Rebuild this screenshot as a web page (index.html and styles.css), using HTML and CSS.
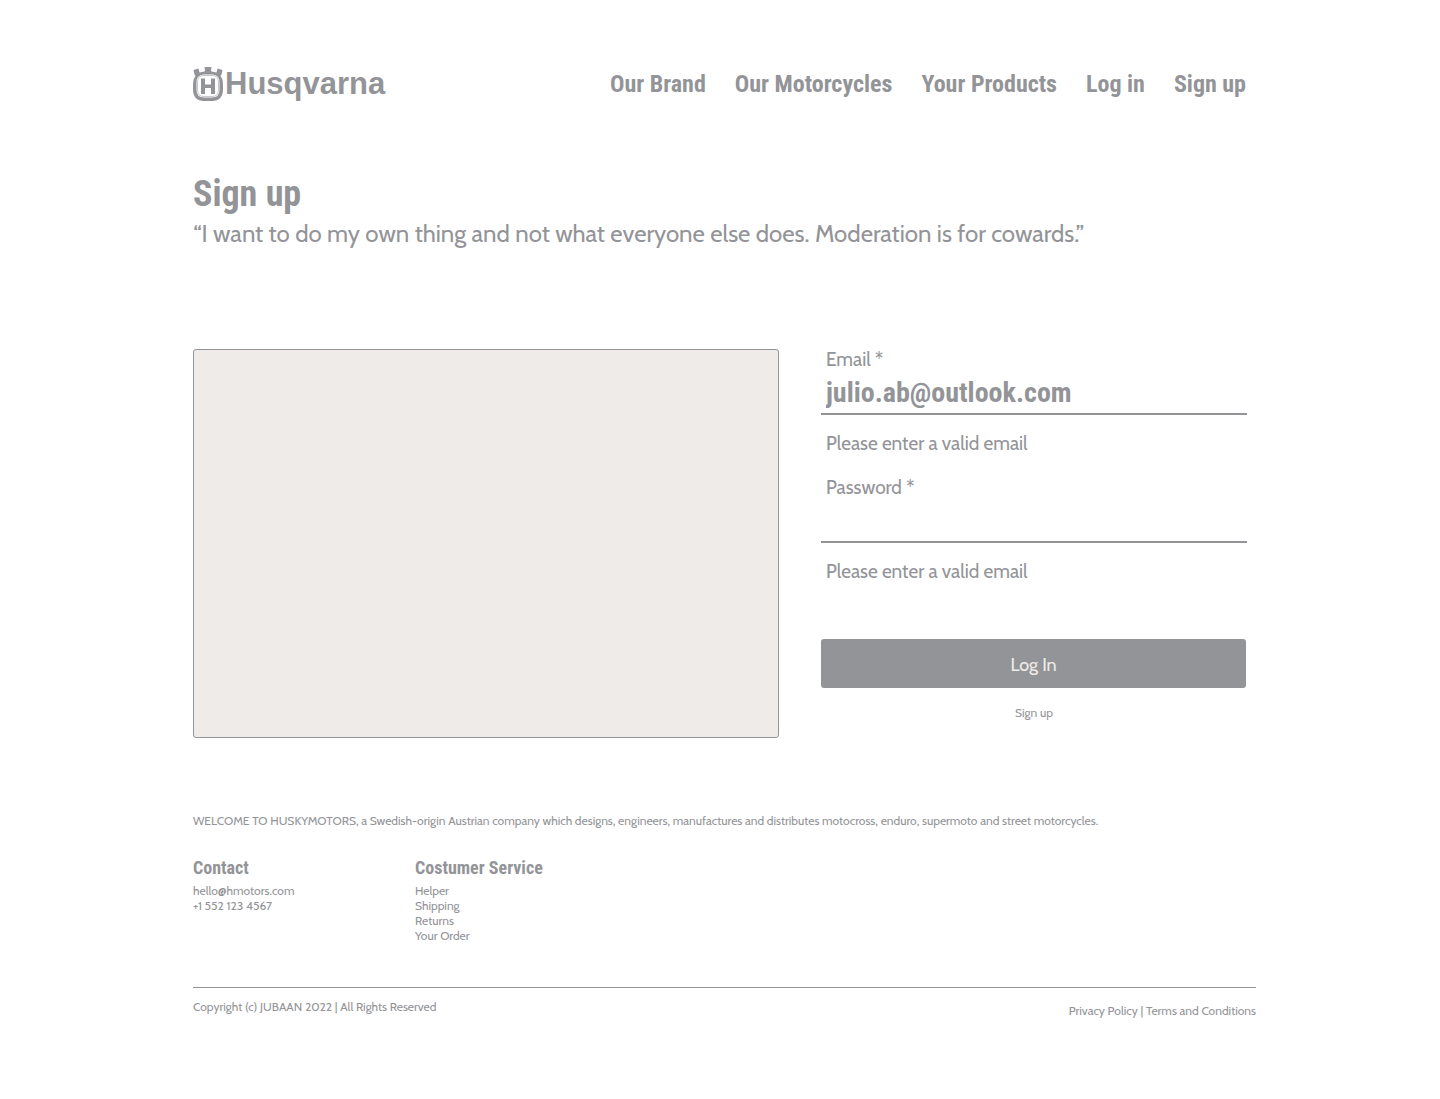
FILE: index.html
```html
<!DOCTYPE html>
<html lang="en">
<head>
<meta charset="utf-8">
<meta name="viewport" content="width=device-width, initial-scale=1">
<title>Sign up | Husqvarna</title>
<link rel="stylesheet" href="styles.css">
</head>
<body>
<div class="page">
  <header class="header">
    <a class="logo" href="#">
      <svg class="logo-mark" viewBox="0 0 30 34" aria-hidden="true">
        <path fill="currentColor" fill-rule="evenodd" d="M0.500 3 L5.500 1.500 L6.500 5.500 L11.500 4.500 L12 3.500 L11.500 0 H18.500 L18 3.500 L18.500 4.500 L23.500 5.500 L24.500 1.500 L29.500 3 L28.500 7.500 L27.500 9 Q30 12 30 18 V22 Q30 34 19 34 H11 Q0 34 0 22 V18 Q0 12 2.500 9 L1.500 7.500 Z M10.500 7.500 Q3.500 8 3.500 15 V23 Q3.500 30.500 11 30.500 H19 Q26.500 30.500 26.500 23 V15 Q26.500 8 19.500 7.500 Z"/>
        <path fill="none" stroke="currentColor" stroke-width="1" opacity="0.500" d="M11 8.500 H19 Q25.500 8.500 25.500 15 V23 Q25.500 29.500 19 29.500 H11 Q4.500 29.500 4.500 23 V15 Q4.500 8.500 11 8.500 Z"/>
        <path fill="currentColor" d="M8 11.500 H12 V17.500 H18 V11.500 H22 V27 H18 V21 H12 V27 H8 Z"/>
      </svg>
      <span class="logo-name">Husqvarna</span>
    </a>
    <nav class="nav" aria-label="Main">
      <a href="#">Our Brand</a>
      <a href="#">Our Motorcycles</a>
      <a href="#">Your Products</a>
      <a href="#">Log in</a>
      <a href="#">Sign up</a>
    </nav>
  </header>

  <main>
    <section class="intro">
      <h1>Sign up</h1>
      <p>“I want to do my own thing and not what everyone else does. Moderation is for cowards.”</p>
    </section>
    <section class="signup">
      <div class="picture"></div>
      <form class="form">
        <div class="field">
          <label for="email">Email *</label>
          <input id="email" type="email" value="julio.ab@outlook.com" aria-describedby="email-hint">
          <p id="email-hint">Please enter a valid email</p>
        </div>
        <div class="field">
          <label for="password">Password *</label>
          <input id="password" type="password" aria-describedby="password-hint">
          <p id="password-hint">Please enter a valid email</p>
        </div>
        <button class="submit" type="button">Log In</button>
        <a class="alternate" href="#">Sign up</a>
      </form>
    </section>
  </main>

  <footer class="footer">
    <p>WELCOME TO HUSKYMOTORS, a Swedish-origin Austrian company which designs, engineers, manufactures and distributes motocross, enduro, supermoto and street motorcycles.</p>
    <div class="columns">
      <section>
        <h2>Contact</h2>
        <ul>
          <li><a href="#">hello@hmotors.com</a></li>
          <li><a href="#">+1 552 123 4567</a></li>
        </ul>
      </section>
      <section>
        <h2>Costumer Service</h2>
        <ul>
          <li><a href="#">Helper</a></li>
          <li><a href="#">Shipping</a></li>
          <li><a href="#">Returns</a></li>
          <li><a href="#">Your Order</a></li>
        </ul>
      </section>
    </div>
    <div class="legal">
      <span>Copyright (c) JUBAAN 2022 | All Rights Reserved</span>
      <span class="legal-links"><a href="#">Privacy Policy</a> | <a href="#">Terms and Conditions</a></span>
    </div>
  </footer>
</div>
</body>
</html>
```
FILE: styles.css
```css
:root {
  --gray: #939498;
  --sand: #efebe8;
  --display: "Roboto Condensed", "Liberation Sans Narrow", "Roboto", sans-serif;
  --text: "Cabin", "Lato", sans-serif;
}

* {
  box-sizing: border-box;
  margin: 0;
}

body {
  background: #fff;
  color: var(--gray);
  font: 12px/15px var(--text);
}

a {
  color: inherit;
  text-decoration: none;
}

.page {
  padding: 64px 184px 80px 193px;
}

.header {
  display: flex;
  align-items: center;
  justify-content: space-between;
  padding-right: 10px;
}

.logo {
  display: flex;
  align-items: center;
  gap: 2px;
}

.logo-mark {
  width: 30px;
  height: 34px;
}

.logo-name {
  font: bold 31px/40px "Liberation Sans", sans-serif;
}

.nav {
  display: flex;
  gap: 29px;
  font: bold 24px/40px var(--display);
}

.intro {
  padding-top: 68px;
}

.intro h1 {
  font: bold 36px/44px var(--display);
}

.intro p {
  font-size: 24px;
  line-height: 36px;
}

.signup {
  display: grid;
  grid-template-columns: 586fr 426fr;
  gap: 42px;
  padding: 97px 9px 0 0;
}

.picture {
  min-height: 389px;
  background: var(--sand);
  border: 1px solid var(--gray);
  border-radius: 3px;
}

.form {
  display: flex;
  flex-direction: column;
}

.field {
  display: flex;
  flex-direction: column;
  height: 128px;
  font-size: 19px;
  line-height: 22px;
}

.field label,
.field p {
  padding-left: 5px;
}

.field input {
  width: 100%;
  height: 44px;
  padding: 0 5px;
  margin-bottom: 18px;
  background: none;
  border: 0;
  border-bottom: 2px solid var(--gray);
  outline: 0;
  color: inherit;
  font: bold 28px/40px var(--display);
}

.submit {
  height: 49px;
  margin: 34px 1px 0 0;
  padding: 2px 0 0;
  background: var(--gray);
  border: 0;
  border-radius: 3px;
  color: var(--sand);
  font: 18px/22px var(--text);
}

.alternate {
  align-self: center;
  margin-top: 17px;
}

.footer {
  padding-top: 75px;
}

.columns {
  display: grid;
  grid-template-columns: 222px 1fr;
  padding: 29px 0 44px;
}

.columns h2 {
  padding-bottom: 4px;
  font: bold 18px/22px var(--display);
}

.columns ul {
  padding: 0;
  list-style: none;
}

.legal {
  display: flex;
  justify-content: space-between;
  padding-top: 11px;
  border-top: 1px solid var(--gray);
}

.legal-links {
  padding-top: 4px;
}
```
